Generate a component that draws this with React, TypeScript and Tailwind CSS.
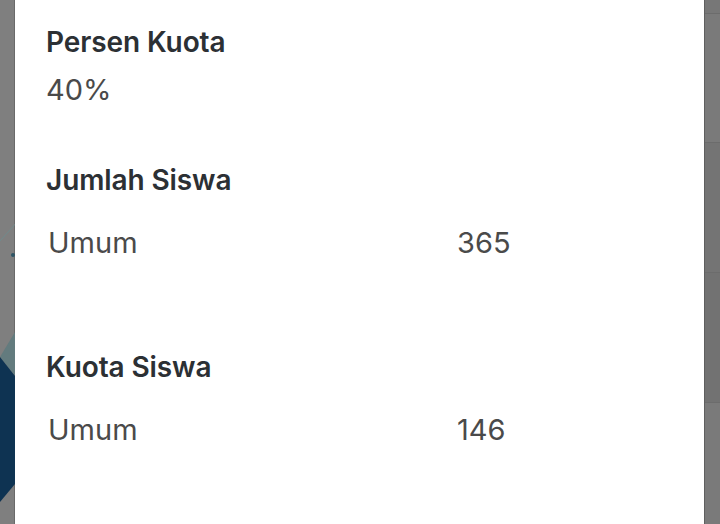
import React from 'react';

const sections = [
  { title: 'Jumlah Siswa', rows: [{ label: 'Umum', value: '365' }] },
  { title: 'Kuota Siswa', rows: [{ label: 'Umum', value: '146' }] },
];

function LeftBackdrop() {
  // dimmed page behind the modal, only a sliver shows
  return (
    <div className="w-[15px] shrink-0 bg-[#7f7f7f] border-r border-[#6a6a6a]">
      <svg width="15" height="524" viewBox="0 0 15 524" className="block">
        <line x1="18" y1="221" x2="0" y2="241" stroke="#708a8c" strokeWidth="1" />
        <circle cx="13" cy="255" r="2" fill="#2e5566" />
        <polygon points="15,332 15,376 0,357" fill="#637b7e" />
        <polygon points="0,357 15,376 15,484 0,502" fill="#0e3352" />
      </svg>
    </div>
  );
}

function RightBackdrop() {
  return (
    <div className="w-[16px] shrink-0 flex flex-col bg-[#7a7a7a] border-l border-[#5f5f5f]">
      <div className="h-[14px] border-b border-[#6c6c6c] bg-[#777777]" />
      <div className="h-[129px] border-b border-[#6c6c6c]" />
      <div className="h-[130px] border-b border-[#6c6c6c] bg-[#747474]" />
      <div className="h-[130px] border-b border-[#6c6c6c] bg-[#727272]" />
      <div className="flex-1" />
    </div>
  );
}

export default function App() {
  return (
    <div className="h-[524px] w-[720px] overflow-hidden flex bg-[#7a7a7a] font-['Inter','Noto_Sans',sans-serif]">
      <LeftBackdrop />
      <div className="flex-1 bg-white pl-[31px] pt-[24px]">
        <h2 className="text-[28px] leading-[36px] font-semibold text-[#2c3034] tracking-[-0.1px]">Persen Kuota</h2>
        <p className="mt-[12px] text-[29px] leading-[36px] text-[#4a4a4a]">40%</p>

        {sections.map((s, i) => (
          <div key={s.title} className={i === 0 ? 'mt-[54px]' : 'mt-[88px]'}>
            <h2 className="text-[28px] leading-[36px] font-semibold text-[#2c3034] tracking-[-0.1px]">{s.title}</h2>
            <table className="mt-[27px] border-collapse">
              <tbody>
                {s.rows.map((r) => (
                  <tr key={r.label}>
                    <td className="w-[411px] pl-[2px] text-[29px] leading-[36px] text-[#4a4a4a]">{r.label}</td>
                    <td className="text-[29px] leading-[36px] text-[#4a4a4a]">{r.value}</td>
                  </tr>
                ))}
              </tbody>
            </table>
          </div>
        ))}
      </div>
      <RightBackdrop />
    </div>
  );
}
